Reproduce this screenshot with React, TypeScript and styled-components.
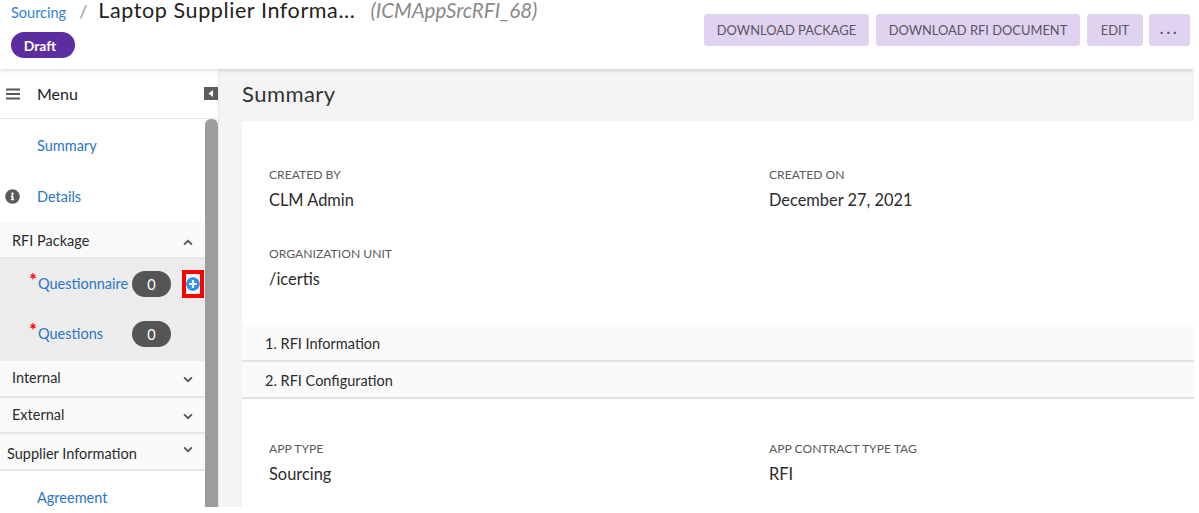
import React from "react";
import styled, { createGlobalStyle } from "styled-components";
import { FaInfoCircle, FaPlusCircle } from "react-icons/fa";

const Global = createGlobalStyle`
  html, body { margin: 0; padding: 0; background: #fff; overflow: hidden; }
  body { font-family: "Lato", "Noto Sans", sans-serif; color: #333; }
`;

const Frame = styled.div`
  width: 1194px;
  height: 507px;
  display: flex;
  flex-direction: column;
  overflow: hidden;
  background: #f4f4f4;
`;

const Header = styled.header`
  height: 69px;
  flex: none;
  background: #fff;
  box-shadow: 0 1px 4px rgba(0, 0, 0, 0.18);
  display: flex;
  justify-content: space-between;
  position: relative;
  z-index: 1;
`;

const HeaderLeft = styled.div`
  padding-left: 11px;
  display: flex;
  flex-direction: column;
`;

const Crumbs = styled.div`
  display: flex;
  align-items: baseline;
  height: 32px;
`;

const CrumbLink = styled.a`
  font-size: 14.5px;
  color: #2f86cf;
`;

const CrumbSlash = styled.span`
  font-size: 18px;
  color: #999;
  margin: 0 11px 0 13px;
`;

const Title = styled.h1`
  margin: 0;
  font-size: 21.5px;
  line-height: 20px;
  font-weight: 400;
  color: #222;
  letter-spacing: 0.6px;
`;

const TitleId = styled.span`
  margin-left: 15px;
  font-size: 20.5px;
  line-height: 20px;
  font-style: italic;
  color: #8a8a8a;
`;

const Status = styled.span`
  width: 64px;
  height: 26px;
  box-sizing: border-box;
  padding-right: 6px;
  border-radius: 13px;
  background: #5c2d9f;
  color: #fff;
  font-size: 14px;
  font-weight: 700;
  display: flex;
  align-items: center;
  justify-content: center;
`;

const Actions = styled.div`
  display: flex;
  gap: 7px;
  padding: 14px 4px 0 0;
  align-items: flex-start;
`;

const ActionButton = styled.button<{ $w: number; $dots?: boolean }>`
  width: ${(p) => p.$w}px;
  height: 32px;
  border: 0;
  border-radius: 3px;
  background: #dfd3f0;
  color: #5b5563;
  font-family: inherit;
  font-size: ${(p) => (p.$dots ? 16 : 12.9)}px;
  letter-spacing: ${(p) => (p.$dots ? 2.5 : 0)}px;
  margin-left: ${(p) => (p.$dots ? -1 : 0)}px;
  padding: 0;
  white-space: nowrap;
`;

const Body = styled.div`
  flex: 1;
  min-height: 0;
  display: flex;
`;

const Sidebar = styled.aside`
  width: 218px;
  flex: none;
  background: #fff;
  display: flex;
  flex-direction: column;
  border-right: 1px solid #e8e8e8;
`;

const MenuHead = styled.div`
  height: 49px;
  flex: none;
  display: flex;
  align-items: center;
  border-bottom: 1px solid #e8e8e8;
  padding: 0 0 0 6px;
  font-size: 16px;
  color: #222;
`;

const MenuLabel = styled.span`
  margin-left: 17px;
  flex: 1;
`;

const SideScroll = styled.div`
  flex: 1;
  min-height: 0;
  display: flex;
`;

const NavList = styled.nav`
  flex: 1;
  min-width: 0;
  overflow: hidden;
`;

const ScrollThumb = styled.div`
  width: 13px;
  flex: none;
  background: #9c9c9c;
  border-radius: 6px 6px 0 0;
`;

const NavItem = styled.a<{ $h: number; $pb?: number }>`
  height: ${(p) => p.$h}px;
  box-sizing: border-box;
  padding-bottom: ${(p) => p.$pb ?? 0}px;
  display: flex;
  align-items: center;
  font-size: 14.5px;
  color: #2a76c6;
`;

const ItemIcon = styled.span`
  width: 37px;
  padding-left: 5px;
  box-sizing: border-box;
  flex: none;
  display: flex;
  align-items: center;
  color: #5a5a5a;
  font-size: 15px;
`;

const Group = styled.div<{ $pad?: number; $h: number }>`
  height: ${(p) => p.$h}px;
  box-sizing: border-box;
  background: #fafafa;
  border-bottom: 2px solid #e6e6e6;
  display: flex;
  align-items: center;
  justify-content: space-between;
  padding: 0 12px 0 ${(p) => p.$pad ?? 12}px;
  font-size: 14.5px;
  color: #2b2b2b;
`;

const GroupLabel = styled.span<{ $nudge: number }>`
  margin-top: ${(p) => p.$nudge}px;
`;

const SubList = styled.div`
  height: 102px;
  background: #ececec;
`;

const SubRow = styled.div`
  height: 50px;
  display: flex;
  align-items: center;
  padding-left: 29px;
  position: relative;
`;

const Req = styled.span`
  color: #f00;
  font-size: 19px;
  font-weight: 700;
  line-height: 1;
  align-self: flex-start;
  margin-top: 11px;
  width: 9px;
`;

const SubLink = styled.a`
  width: 94px;
  margin-top: -2px;
  font-size: 14.5px;
  color: #2a76c6;
  white-space: nowrap;
`;

const Count = styled.span`
  width: 39px;
  height: 26px;
  border-radius: 13px;
  background: #555;
  color: #fff;
  font-size: 14.5px;
  display: flex;
  align-items: center;
  justify-content: center;
`;

const AddBox = styled.span`
  position: absolute;
  left: 182px;
  top: 11px;
  width: 22px;
  height: 28px;
  box-sizing: border-box;
  border: 4px solid #f00;
  background: #f4f4f4;
  display: flex;
  align-items: center;
  justify-content: center;
  color: #2f8ff0;
  font-size: 14px;
`;

const Main = styled.main`
  flex: 1;
  min-width: 0;
  padding-left: 23px;
  display: flex;
  flex-direction: column;
`;

const PageTitle = styled.h2`
  height: 52px;
  box-sizing: border-box;
  padding-bottom: 4px;
  margin: 0;
  flex: none;
  display: flex;
  align-items: center;
  font-size: 22px;
  font-weight: 400;
  color: #333;
  letter-spacing: 0.45px;
`;

const Card = styled.section`
  flex: 1;
  background: #fff;
  overflow: hidden;
`;

const FieldGrid = styled.div<{ $top: number; $h: number }>`
  display: grid;
  grid-template-columns: 500px 1fr;
  grid-auto-rows: 79px;
  padding: ${(p) => p.$top}px 0 0 27px;
  height: ${(p) => p.$h}px;
  box-sizing: border-box;
`;

const Field = styled.div``;

const Label = styled.div`
  font-size: 12.15px;
  line-height: 16px;
  color: #5a5a5a;
  text-transform: uppercase;
`;

const Value = styled.div`
  margin-top: 6px;
  font-size: 16.4px;
  line-height: 22px;
  color: #2c2c2c;
`;

const Section = styled.div`
  height: 37px;
  box-sizing: border-box;
  padding: 1px 0 0 23px;
  background: #fafafa;
  border-bottom: 2px solid #e4e4e4;
  display: flex;
  align-items: center;
  font-size: 14.5px;
  color: #2b2b2b;
`;

const ChevronSvg = styled.svg<{ $dy: number; $up?: boolean }>`
  width: 10px;
  height: 7px;
  margin-top: ${(p) => p.$dy}px;
  transform: ${(p) => (p.$up ? "rotate(180deg)" : "none")};
`;

const Chevron = ({ up, dy }: { up?: boolean; dy: number }) => (
  <ChevronSvg viewBox="0 0 11 7" $dy={dy} $up={up}>
    <path d="M1.2 1.2 5.5 5.3 9.8 1.2" fill="none" stroke="#555" strokeWidth="2" />
  </ChevronSvg>
);

const Burger = () => (
  <svg width="14" height="12" viewBox="0 0 14 12">
    <path d="M0 1.5h14M0 6h14M0 10.5h14" stroke="#555" strokeWidth="2" />
  </svg>
);

const Collapse = () => (
  <svg width="14" height="13" viewBox="0 0 14 13">
    <rect width="14" height="13" fill="#5c5c5c" />
    <path d="M9 3v7L4.5 6.5z" fill="#fff" />
  </svg>
);

export default function App() {
  return (
    <>
      <Global />
      <Frame>
        <Header>
          <HeaderLeft>
            <Crumbs>
              <CrumbLink>Sourcing</CrumbLink>
              <CrumbSlash>/</CrumbSlash>
              <Title>Laptop Supplier Informa...</Title>
              <TitleId>(ICMAppSrcRFI_68)</TitleId>
            </Crumbs>
            <Status>Draft</Status>
          </HeaderLeft>
          <Actions>
            <ActionButton $w={165}>DOWNLOAD PACKAGE</ActionButton>
            <ActionButton $w={204}>DOWNLOAD RFI DOCUMENT</ActionButton>
            <ActionButton $w={56}>EDIT</ActionButton>
            <ActionButton $w={41} $dots>···</ActionButton>
          </Actions>
        </Header>
        <Body>
          <Sidebar>
            <MenuHead>
              <Burger />
              <MenuLabel>Menu</MenuLabel>
              <Collapse />
            </MenuHead>
            <SideScroll>
              <NavList>
                <NavItem $h={53}>
                  <ItemIcon />
                  Summary
                </NavItem>
                <NavItem $h={50} $pb={2}>
                  <ItemIcon>
                    <FaInfoCircle />
                  </ItemIcon>
                  Details
                </NavItem>
                <Group $h={37}>
                  <GroupLabel $nudge={2}>RFI Package</GroupLabel>
                  <Chevron up dy={6} />
                </Group>
                <SubList>
                  <SubRow>
                    <Req>*</Req>
                    <SubLink>Questionnaire</SubLink>
                    <Count>0</Count>
                    <AddBox>
                      <FaPlusCircle />
                    </AddBox>
                  </SubRow>
                  <SubRow>
                    <Req>*</Req>
                    <SubLink>Questions</SubLink>
                    <Count>0</Count>
                  </SubRow>
                </SubList>
                <Group $h={37}>
                  <GroupLabel $nudge={-2}>Internal</GroupLabel>
                  <Chevron dy={2} />
                </Group>
                <Group $h={36}>
                  <GroupLabel $nudge={-2}>External</GroupLabel>
                  <Chevron dy={2} />
                </Group>
                <Group $h={37} $pad={7}>
                  <GroupLabel $nudge={4}>Supplier Information</GroupLabel>
                  <Chevron dy={-4} />
                </Group>
                <NavItem $h={55} $pb={2}>
                  <ItemIcon />
                  Agreement
                </NavItem>
              </NavList>
              <ScrollThumb />
            </SideScroll>
          </Sidebar>
          <Main>
            <PageTitle>Summary</PageTitle>
            <Card>
              <FieldGrid $top={46} $h={204}>
                <Field>
                  <Label>Created By</Label>
                  <Value>CLM Admin</Value>
                </Field>
                <Field>
                  <Label>Created On</Label>
                  <Value>December 27, 2021</Value>
                </Field>
                <Field>
                  <Label>Organization Unit</Label>
                  <Value>/icertis</Value>
                </Field>
              </FieldGrid>
              <Section>1. RFI Information</Section>
              <Section>2. RFI Configuration</Section>
              <FieldGrid $top={42} $h={110}>
                <Field>
                  <Label>App Type</Label>
                  <Value>Sourcing</Value>
                </Field>
                <Field>
                  <Label>App Contract Type Tag</Label>
                  <Value>RFI</Value>
                </Field>
              </FieldGrid>
            </Card>
          </Main>
        </Body>
      </Frame>
    </>
  );
}
